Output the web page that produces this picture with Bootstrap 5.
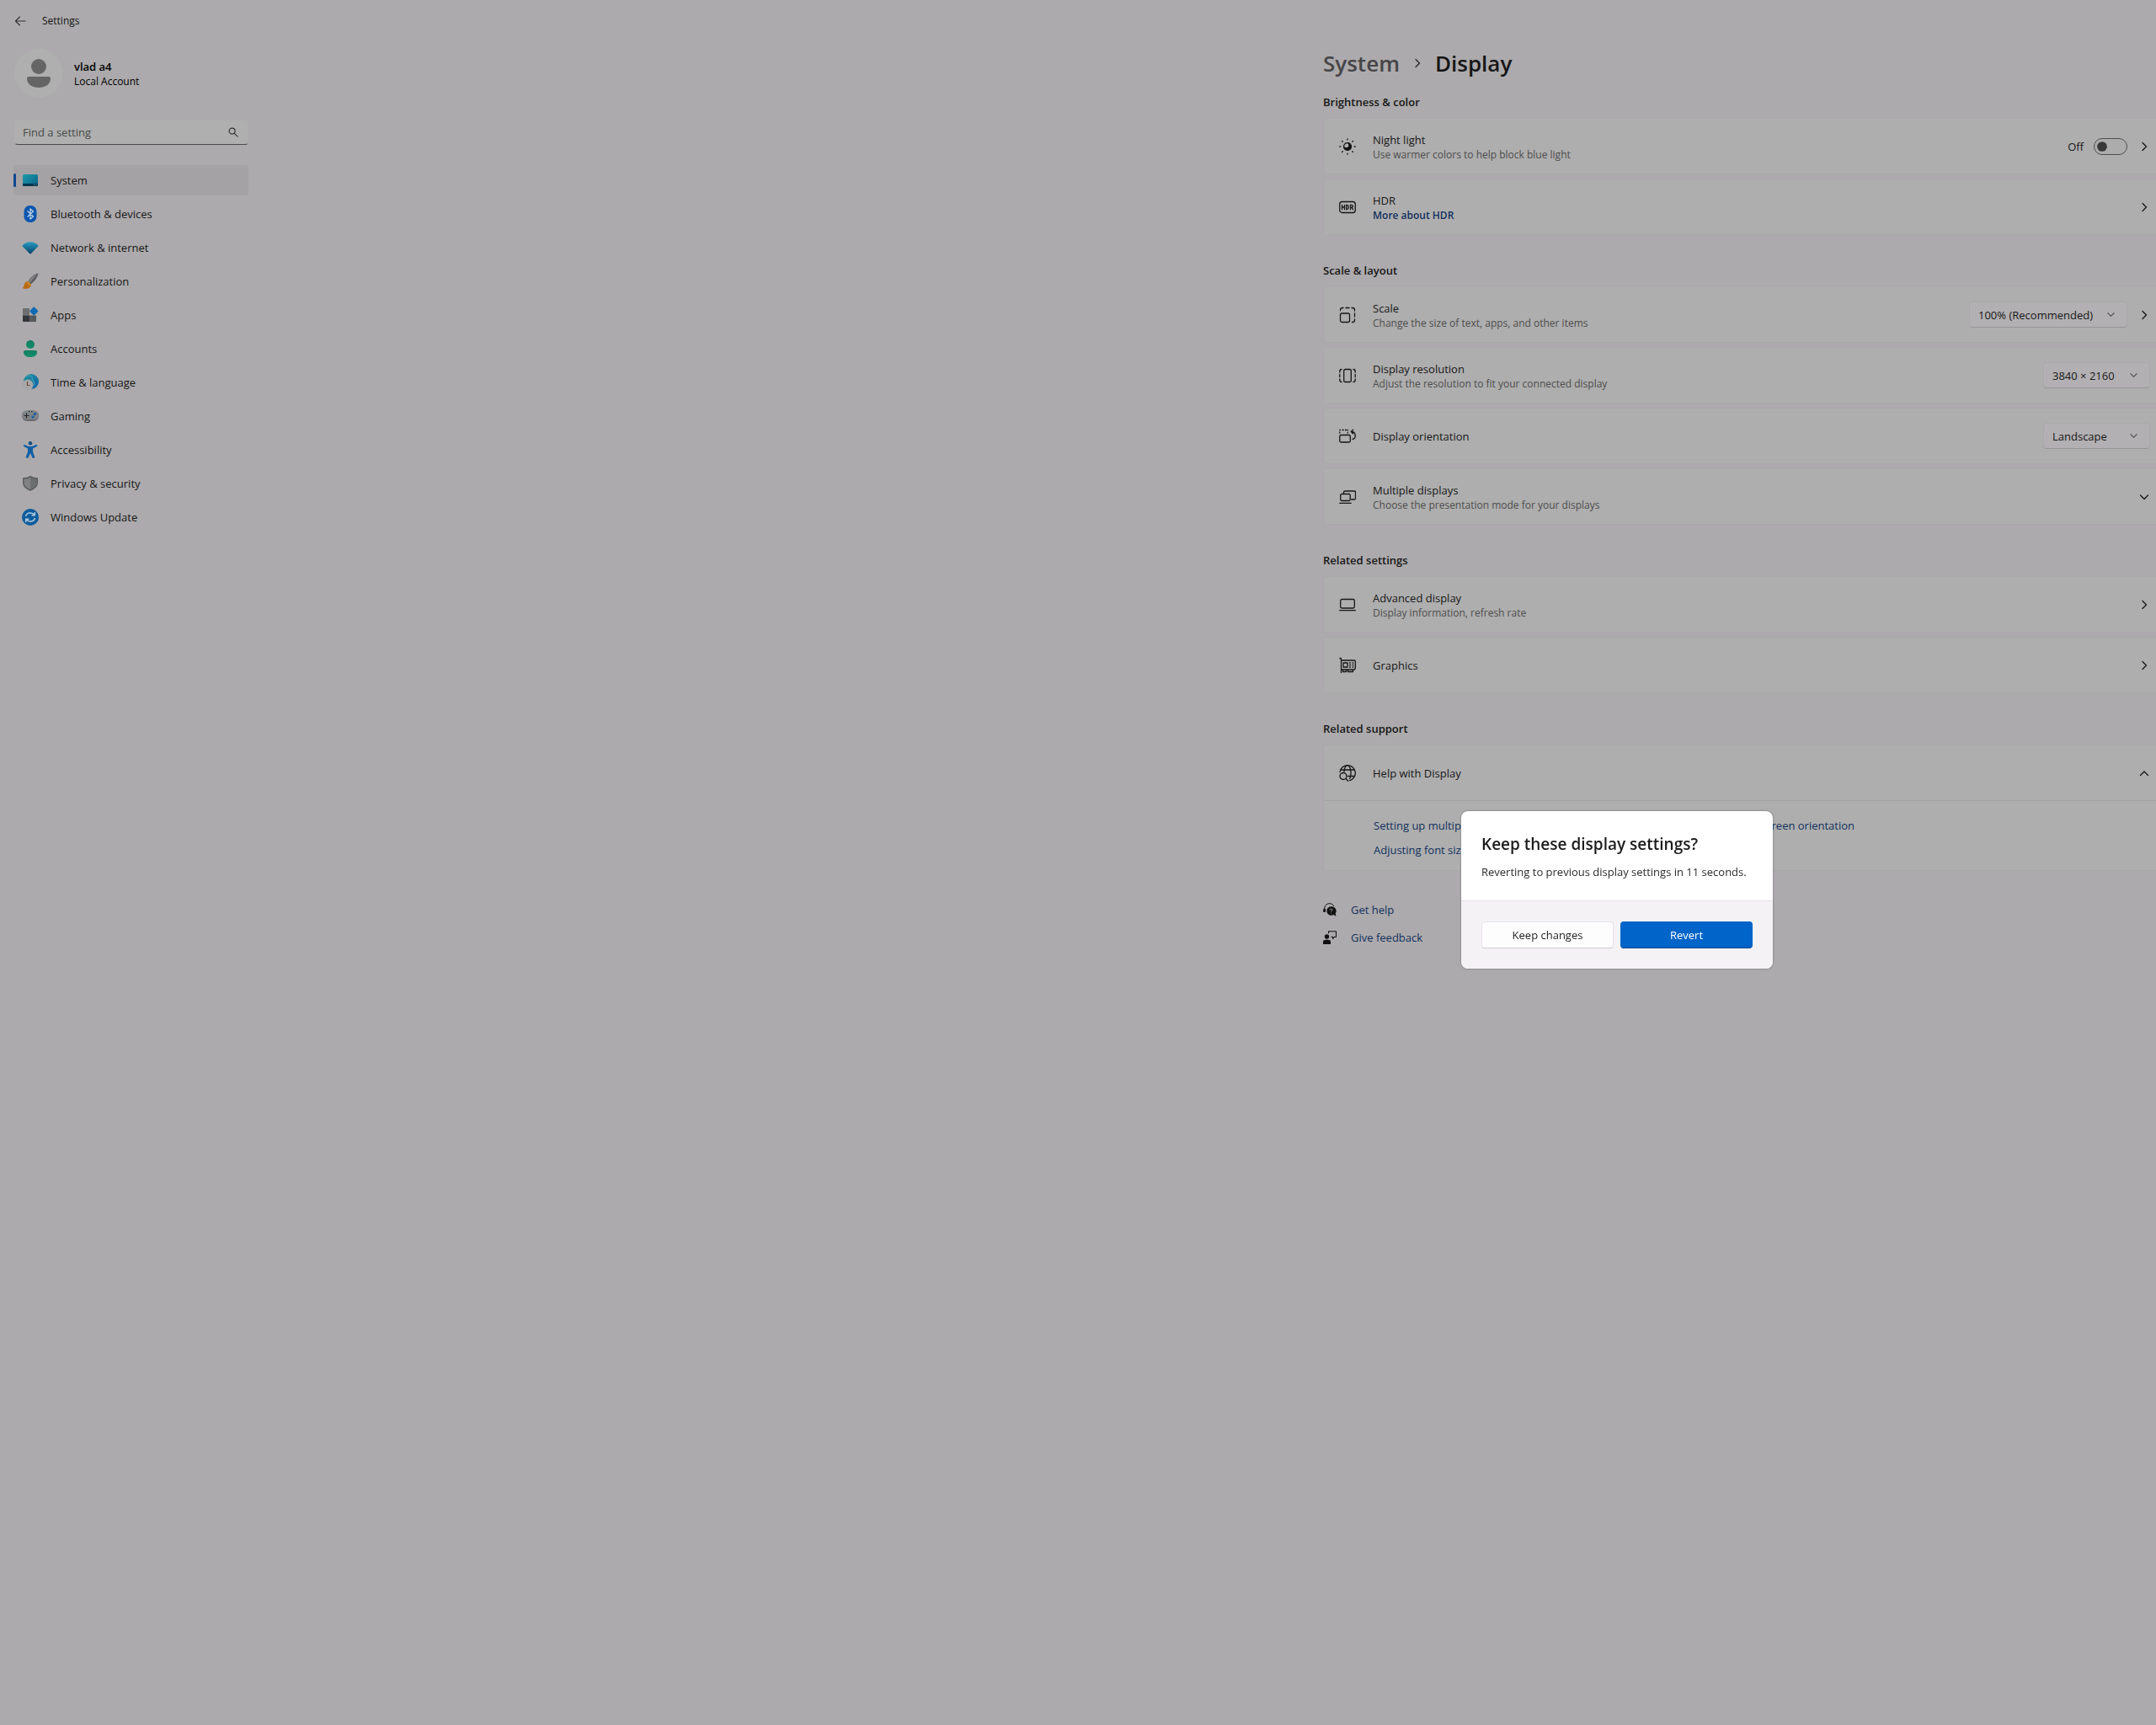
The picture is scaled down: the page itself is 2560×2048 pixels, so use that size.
<!DOCTYPE html>
<html lang="en">
<head>
<meta charset="utf-8">
<meta name="viewport" content="width=device-width, initial-scale=1">
<title>Settings</title>
<link href="https://cdn.jsdelivr.net/npm/bootstrap@5.3.0/dist/css/bootstrap.min.css" rel="stylesheet">
<style>
:root{--page:#acaaac;--panel:#aeaeae;--line:#aaa9aa;--ink:#161616;--soft:#4d4d4d;--link:#12305c}
body{background:var(--page);color:var(--ink);font-family:"Open Sans","Noto Sans",sans-serif;font-size:13px;line-height:20px;min-height:100vh}
a{color:var(--link);text-decoration:none}
svg{display:block;flex:none}
.fine{font-size:12px;line-height:16px}
.hint{color:var(--soft)}
.ln{fill:none;stroke:currentColor;stroke-width:1.3;stroke-linecap:round;stroke-linejoin:round}

.side{width:295px;padding:0 0 0 16px;flex:none}
.titlebar{height:49px;padding-left:1px;gap:19px}
.back{background:none;border:0;padding:0;color:#333}
.profile{height:58px;gap:13px;margin-top:9px;padding-left:1px}
.avatar{width:58px;height:58px;border-radius:50%;background:#aeafae}
.search{margin:26px 0 24px 1px;position:relative}
.search .form-control{height:30px;background:#afafaf;border:1px solid #adadad;border-bottom:1px solid #4a4a4a;border-radius:4px;font-size:13px;padding:0 32px 0 9px;color:var(--ink)}
.search .form-control::placeholder{color:#484a48;opacity:1}
.search svg{position:absolute;right:12px;top:9px;color:#333}
.side .nav{gap:4px}
.side .nav-link{height:36px;padding:0 0 0 10px;gap:14px;color:var(--ink);border-radius:4px;position:relative}
.side .nav-link.active{background:#a4a2a4}
.side .nav-link.active::before{content:"";position:absolute;left:0;top:10px;width:3px;height:16px;border-radius:2px;background:#0a468f}

.pane{width:100%;max-width:989px;margin-left:auto;padding-top:57px}
.crumbs{font-size:26px;line-height:36px;font-weight:600;gap:14px;margin-bottom:18px}
.crumbs a{color:#464547}
.crumbs h1{font:inherit;margin:0}
.group-title{font-size:13px;line-height:20px;font-weight:600;margin:0 0 9px}
.group{margin-bottom:32px}
.rows{gap:5px}
.setting{min-height:67px;background:var(--panel);border:1px solid var(--line);border-right:0;border-radius:4px 0 0 4px;padding:0 7px 0 18px;gap:20px}
.setting .tail{gap:13px}
.setting .form-select{width:127px;height:31px;font-size:13px;line-height:20px;padding:0 32px 0 10px;color:var(--ink);border:1px solid #aaa8aa;border-bottom-color:#979597;border-radius:4px;background-color:#b2b0b2;background-position:right 13px center;background-size:11px 11px;
background-image:url("data:image/svg+xml,%3csvg xmlns='http://www.w3.org/2000/svg' viewBox='0 0 12 12'%3e%3cpath fill='none' stroke='%23444' stroke-width='1.1' stroke-linecap='round' d='M2 4l4 4 4-4'/%3e%3c/svg%3e")}
.setting .form-select.wide{width:188px}
.switch{gap:12px}
.switch .form-check-input{width:40px;height:20px;margin:0;border:1px solid #4f4f4f;background-color:#acacac;
background-image:url("data:image/svg+xml,%3csvg xmlns='http://www.w3.org/2000/svg' viewBox='-4 -4 8 8'%3e%3ccircle r='2.6' fill='%23383838'/%3e%3c/svg%3e");background-position:left center}
.help-top{border-radius:4px 0 0 0;border-bottom-color:#a3a2a3}
.help-body{background:var(--panel);border:1px solid var(--line);border-top:0;border-right:0;border-radius:0 0 0 4px;padding:19px 0 14px 59px;gap:9px}
.help-col{width:400px}
.extra{gap:13px;margin-top:36px}
.extra a{gap:17px}
.extra svg{color:#111}

.veil{position:fixed;top:64px;right:0;bottom:0;width:50%}
.dialog-box{width:370px;background:#fff;border:0;border-radius:8px;box-shadow:0 0 2px rgba(0,0,0,.5);overflow:hidden}
.dialog-box .modal-body{padding:26px 24px 0;height:106px;flex:none}
.dialog-box h2{font-size:19px;line-height:26px;font-weight:600;margin:0 0 10px;color:#1b1b1b}
.dialog-box p{margin:0;color:#2b2b2b}
.dialog-box .modal-footer{background:#f5f2f6;border-top:1px solid #e3e0e4;border-radius:0;padding:24px;gap:8px;flex-wrap:nowrap}
.dialog-box .btn{margin:0;height:32px;font-size:13px;line-height:20px;padding:0;border-radius:4px;flex:1 1 0}
.btn-keep,.btn-keep:hover{background:#fefdfe;border:1px solid #e6e3e7;border-bottom-color:#cfccd0;color:#1f1f1f}
.btn-revert,.btn-revert:hover{background:#0064c8;border:1px solid #0064c8;border-bottom-color:#00468f;color:#fff}
</style>
</head>
<body>
<svg width="0" height="0" class="position-absolute" aria-hidden="true">
  <defs>
    <linearGradient id="gTeal" x1="0" y1="0" x2="1" y2="1"><stop offset="0" stop-color="#1c9bac"/><stop offset="1" stop-color="#0b5f86"/></linearGradient>
    <linearGradient id="gWifi" x1="0" y1="0" x2="0" y2="1"><stop offset="0" stop-color="#2a9fc0"/><stop offset="1" stop-color="#063f6c"/></linearGradient>
    <linearGradient id="gGlobe" x1="0" y1="0" x2="1" y2="1"><stop offset="0" stop-color="#22939f"/><stop offset="1" stop-color="#0c61a8"/></linearGradient>
    <linearGradient id="gGreen" x1="0" y1="0" x2="0" y2="1"><stop offset="0" stop-color="#107c5e"/><stop offset="1" stop-color="#14906f"/></linearGradient>
    <symbol id="right" viewBox="0 0 14 14"><path class="ln" d="M5 2.500 9.500 7 5 11.500"/></symbol>
    <symbol id="down" viewBox="0 0 14 14"><path class="ln" d="M2.500 5 7 9.500 11.500 5"/></symbol>
    <symbol id="up" viewBox="0 0 14 14"><path class="ln" d="M2.500 9.500 7 5l4.500 4.500"/></symbol>
  </defs>
</svg>

<div class="d-flex">
  <aside class="side">
    <header class="titlebar d-flex align-items-center fine">
      <button class="back" type="button" aria-label="Back"><svg width="14" height="14" viewBox="0 0 14 14"><path class="ln" style="stroke-width:1.100" d="M13 7H1.500M6.500 2l-5 5 5 5"/></svg></button>
      <span>Settings</span>
    </header>
    <div class="profile d-flex align-items-center">
      <div class="avatar d-flex align-items-center justify-content-center">
        <svg width="30" height="36" viewBox="0 0 30 36" fill="#656565"><circle cx="15" cy="10" r="9"/><path d="M3 22h24q2 0 2 2c0 7-6 11-14 11S1 31 1 24q0-2 2-2z"/></svg>
      </div>
      <div><div class="fw-semibold text-black">vlad a4</div><div class="fine text-black">Local Account</div></div>
    </div>
    <form class="search" role="search">
      <input class="form-control" type="search" placeholder="Find a setting" aria-label="Find a setting">
      <svg width="12" height="12" viewBox="0 0 13 13"><circle class="ln" cx="5" cy="5" r="3.800"/><path class="ln" d="M8 8l4 4"/></svg>
    </form>
    <nav class="nav flex-column" aria-label="Settings sections">
      <a class="nav-link active d-flex align-items-center" aria-current="page" href="#system"><svg width="20" height="20" viewBox="0 0 20 20"><rect x="1" y="3" width="18" height="14" rx="1.500" fill="url(#gTeal)"/><path d="M1 14h18v1.500a1.500 1.500 0 0 1-1.500 1.500h-15A1.500 1.500 0 0 1 1 15.500z" fill="#06364f"/><path d="M14 15.500h1M16.500 15.500h1" stroke="#8fb4c4" stroke-width=".8"/></svg>System</a>
      <a class="nav-link d-flex align-items-center" href="#bluetooth"><svg width="20" height="20" viewBox="0 0 20 20"><rect x="2.500" width="15" height="20" rx="7" fill="#0b56ae"/><path d="M6.500 6.500l7 6.500L10 16V4l3.500 3-7 6.500" fill="none" stroke="#b9cfe4" stroke-width="1.300" stroke-linejoin="round"/></svg>Bluetooth &amp; devices</a>
      <a class="nav-link d-flex align-items-center" href="#network"><svg width="20" height="20" viewBox="0 0 20 20"><path d="M.8 7.300C5.500 1.800 14.500 1.800 19.200 7.300q.5.600 0 1.200L10.800 17q-.8.800-1.600 0L.8 8.500q-.5-.6 0-1.200z" fill="url(#gWifi)"/></svg>Network &amp; internet</a>
      <a class="nav-link d-flex align-items-center" href="#personalization"><svg width="20" height="20" viewBox="0 0 20 20"><path d="M19.500.5c-4 .5-10 5-12.500 10l3.500 3C14.500 10.500 19 5 19.500.5z" fill="#5c5c60"/><path d="M18 1.500c-4 1.500-8 5.500-10.500 9.500l1.300 1z" fill="#8a8a8d"/><path d="M7 10c-3 .2-4 2.200-4.300 4.400C2.500 16.700 1 17.500.5 18 5 20.300 11 18 11 13.700z" fill="#b86c14"/><path d="M7 10l4 3.700-1 1.800-4-3.500z" fill="#d08a24"/></svg>Personalization</a>
      <a class="nav-link d-flex align-items-center" href="#apps"><svg width="20" height="20" viewBox="0 0 20 20"><path d="M1 2h8v8.500H1z" fill="#6d6f70"/><path d="M1 10.500h8.500V18H2a1 1 0 0 1-1-1z" fill="#333538"/><path d="M9.500 10.500H17V17a1 1 0 0 1-1 1H9.500z" fill="#55585a"/><rect x="10.500" y="1.700" width="7.500" height="7.500" rx="1" transform="rotate(45 14.250 5.500)" fill="#1069b4"/></svg>Apps</a>
      <a class="nav-link d-flex align-items-center" href="#accounts"><svg width="20" height="20" viewBox="0 0 20 20" fill="url(#gGreen)"><circle cx="10" cy="5" r="5"/><path d="M4 12h12q2 0 2 2c0 4-3.500 6-8 6s-8-2-8-6q0-2 2-2z"/></svg>Accounts</a>
      <a class="nav-link d-flex align-items-center" href="#time"><svg width="20" height="20" viewBox="0 0 20 20"><circle cx="11" cy="9" r="9" fill="url(#gGlobe)"/><path d="M5 3.500c3-1.500 6-1.500 7 0s-1 2.500 1 4 2 4 1 6" fill="none" stroke="#3a9fb0" stroke-width="1.300"/><circle cx="7" cy="13" r="6.500" fill="#a6a6a7"/><path d="M6.500 9v4.500h3" fill="none" stroke="#704a38" stroke-width="1.200"/></svg>Time &amp; language</a>
      <a class="nav-link d-flex align-items-center" href="#gaming"><svg width="20" height="20" viewBox="0 0 20 20"><rect y="3.500" width="20" height="12.500" rx="6.250" fill="#696b6e"/><rect y="3.500" width="20" height="10.500" rx="5.250" fill="#7f8387"/><path d="M5.500 6.500v6M2.500 9.500h6M8 4.500h1.500M11 4.500h1.500" stroke="#25282b" stroke-width="1.200"/><circle cx="13" cy="11" r="1.700" fill="#1b5f9f"/><circle cx="15.500" cy="7.500" r="1.700" fill="#1b5f9f"/></svg>Gaming</a>
      <a class="nav-link d-flex align-items-center" href="#accessibility"><svg width="20" height="20" viewBox="0 0 20 20"><circle cx="10" cy="2.300" r="2.300" fill="#164f85"/><path d="M2.500 3.800 7.800 6h4.400l5.300-2.200 .7 2L13 8.500v4l2.500 6.700-2.800.8L10 14l-2.700 6-2.800-.8L7 12.500v-4L1.800 5.800z" fill="#115ea6"/></svg>Accessibility</a>
      <a class="nav-link d-flex align-items-center" href="#privacy"><svg width="20" height="20" viewBox="0 0 20 20"><path d="M10 .8C12.500 2.500 15.500 3.300 19 3.300v6c0 4.500-4 7.500-9 9.700-5-2.200-9-5.200-9-9.700v-6C4.500 3.300 7.500 2.500 10 .8z" fill="#5c5e5f"/><path d="M10 2.500v14.800c-4.300-2-7.500-4.500-7.500-8V4.800c3 0 5.500-.9 7.500-2.300z" fill="#7f8182"/><path d="M10 2.500v14.800c4.300-2 7.500-4.500 7.500-8V4.800c-3 0-5.500-.9-7.500-2.300z" fill="#6c6e6f"/></svg>Privacy &amp; security</a>
      <a class="nav-link d-flex align-items-center" href="#update"><svg width="20" height="20" viewBox="0 0 20 20"><circle cx="10" cy="10" r="10" fill="#0d5c9e"/><path d="M4.500 9C5.500 4.500 12 3.500 15 7.500M15.300 4v3.800h-3.800M15.500 11c-1 4.500-7.500 5.500-10.500 1.500M4.700 16v-3.800h3.800" fill="none" stroke="#b4c8d8" stroke-width="1.500"/></svg>Windows Update</a>
    </nav>
  </aside>

  <main class="pane">
    <nav class="crumbs d-flex align-items-center" aria-label="Breadcrumb">
      <a href="#system">System</a>
      <svg class="text-dark" width="14" height="14"><use href="#right"/></svg>
      <h1>Display</h1>
    </nav>

    <section class="group">
      <h2 class="group-title">Brightness &amp; color</h2>
      <div class="rows d-flex flex-column">
        <div class="setting d-flex align-items-center">
          <svg width="20" height="20" viewBox="0 0 20 20"><circle cx="10" cy="10" r="4.800" fill="#111"/><circle cx="8.500" cy="8.500" r="2.800" fill="#aeaeae"/><circle class="ln" cx="10" cy="10" r="4.400"/><path class="ln" d="M10 .8v1M10 18.200v1M.8 10h1M18.200 10h1M3.500 3.500l.7.7M15.800 15.800l.7.7M3.500 16.500l.7-.7M15.800 4.200l.7-.7"/></svg>
          <div class="flex-grow-1"><div>Night light</div><div class="fine hint">Use warmer colors to help block blue light</div></div>
          <div class="tail d-flex align-items-center">
            <div class="switch form-switch d-flex align-items-center p-0 m-0"><label for="night">Off</label><input class="form-check-input" type="checkbox" role="switch" id="night"></div>
            <svg width="14" height="14"><use href="#right"/></svg>
          </div>
        </div>
        <div class="setting d-flex align-items-center">
          <svg width="20" height="20" viewBox="0 0 20 20"><rect class="ln" x=".7" y="3.500" width="18.600" height="13" rx="3"/><path class="ln" d="M3.500 7.300v5.400M6.500 7.300v5.400M3.500 10h3M8.700 7.300v5.400h.8q1.700-.4 1.700-2.700T9.500 7.300zM13.500 12.700V7.300h1.400q1.600.2 1.600 1.500t-1.600 1.500h-1.400M15 10.500l1.500 2.200"/></svg>
          <div class="flex-grow-1"><div>HDR</div><a class="fine fw-semibold d-block" href="#hdr">More about HDR</a></div>
          <svg width="14" height="14"><use href="#right"/></svg>
        </div>
      </div>
    </section>

    <section class="group">
      <h2 class="group-title">Scale &amp; layout</h2>
      <div class="rows d-flex flex-column">
        <div class="setting d-flex align-items-center">
          <svg width="20" height="20" viewBox="0 0 20 20"><rect class="ln" x="1.500" y="8" width="11" height="10.500" rx="2"/><path class="ln" d="M1.500 4.500V4q0-2.500 2.500-2.500h1M8 1.500h4M15 1.500h1q2.500 0 2.500 2.500v1M18.500 8v4M18.500 15v1q0 2.500-2.500 2.500h-.5"/></svg>
          <div class="flex-grow-1"><label class="d-block" for="scale">Scale</label><div class="fine hint">Change the size of text, apps, and other items</div></div>
          <div class="tail d-flex align-items-center">
            <select class="form-select wide" id="scale"><option>100% (Recommended)</option></select>
            <svg width="14" height="14"><use href="#right"/></svg>
          </div>
        </div>
        <div class="setting d-flex align-items-center">
          <svg width="20" height="20" viewBox="0 0 20 20"><rect class="ln" x="5.700" y="2.500" width="8.600" height="15" rx="1.500"/><path class="ln" d="M3 2.500Q.8 2.500.8 5v1M.8 8.500v3M.8 14v1q0 2.500 2.200 2.500M17 2.500q2.200 0 2.200 2.500v1M19.200 8.500v3M19.200 14v1q0 2.500-2.200 2.500"/></svg>
          <div class="flex-grow-1"><label class="d-block" for="res">Display resolution</label><div class="fine hint">Adjust the resolution to fit your connected display</div></div>
          <select class="form-select" id="res"><option>3840 × 2160</option></select>
        </div>
        <div class="setting d-flex align-items-center">
          <svg width="20" height="20" viewBox="0 0 20 20"><rect class="ln" x=".8" y="8.500" width="12.500" height="8.500" rx="1.500"/><path class="ln" d="M.8 6V5M.8 2.500h.7M4 2.500h1.200M7.500 2.500h1.200M10.300 2.500v.7M10.300 5.500v.7M14.500 4.500c6 0 6 8.500 1.500 9M16.500 2.300l-2.200 2.200 2.200 2.200"/></svg>
          <label class="flex-grow-1" for="ori">Display orientation</label>
          <select class="form-select" id="ori"><option>Landscape</option></select>
        </div>
        <div class="setting d-flex align-items-center">
          <svg width="20" height="20" viewBox="0 0 20 20"><path class="ln" d="M5.500 6V4.500q0-1.500 1.500-1.500h11q1.500 0 1.500 1.500v7q0 1.500-1.500 1.500h-3.500"/><rect class="ln" x="1.700" y="6.500" width="11.500" height="8" rx="1.500"/><path class="ln" d="M.7 17.300h13.500"/></svg>
          <div class="flex-grow-1"><div>Multiple displays</div><div class="fine hint">Choose the presentation mode for your displays</div></div>
          <svg width="14" height="14"><use href="#down"/></svg>
        </div>
      </div>
    </section>

    <section class="group">
      <h2 class="group-title">Related settings</h2>
      <div class="rows d-flex flex-column">
        <div class="setting d-flex align-items-center">
          <svg width="20" height="20" viewBox="0 0 20 20"><rect class="ln" x="1.700" y="3.500" width="16.600" height="10.500" rx="1.700"/><path class="ln" d="M.7 16.700h18.600"/></svg>
          <div class="flex-grow-1"><div>Advanced display</div><div class="fine hint">Display information, refresh rate</div></div>
          <svg width="14" height="14"><use href="#right"/></svg>
        </div>
        <div class="setting d-flex align-items-center">
          <svg width="20" height="20" viewBox="0 0 20 20"><path class="ln" d="M.8 1.500h1q.7 0 .7.700v16.300M2.500 4h15.500q1.300 0 1.300 1.300v8.400L18 15H2.500M4.500 15v2.500h4V15M10.500 15v2.500h6V15"/><rect class="ln" x="5" y="7" width="5" height="5"/><path class="ln" d="M12.500 7h1M12.500 9.500h1M12.500 12h1M16 7h.8M16 9.500h.8M16 12h.8"/></svg>
          <div class="flex-grow-1">Graphics</div>
          <svg width="14" height="14"><use href="#right"/></svg>
        </div>
      </div>
    </section>

    <section>
      <h2 class="group-title">Related support</h2>
      <div class="setting help-top d-flex align-items-center">
        <svg width="20" height="20" viewBox="0 0 20 20"><path class="ln" d="M1 8.500A9.200 9.200 0 1 1 12.500 18.700M2 6h16.300M10.500 13.500h8M6 8C6.300 3.500 8 .8 10 .8c3.300 0 5.500 8.200 2.800 15.700"/><circle class="ln" cx="5" cy="13.500" r="4"/><path class="ln" d="M8 16.500l2.800 2.700"/></svg>
        <div class="flex-grow-1">Help with Display</div>
        <svg width="14" height="14"><use href="#up"/></svg>
      </div>
      <div class="help-body d-flex flex-column">
        <div class="d-flex"><a class="help-col" href="#monitors">Setting up multiple monitors</a><a href="#orientation">Changing screen orientation</a></div>
        <div class="d-flex"><a class="help-col" href="#font-size">Adjusting font size</a></div>
      </div>
    </section>

    <div class="extra d-flex flex-column align-items-start">
      <a class="d-flex align-items-center" href="#help"><svg width="16" height="16" viewBox="0 0 16 16"><path class="ln" style="stroke-width:1" d="M1.500 7.500C1.500 3.500 4 .7 7.500.7c2.500 0 4.500 1.300 5.300 3M1.500 7v3M.7 8v2.500h1.800V7.500z"/><path d="M9.500 4.200a5.300 5.300 0 1 0 2.800 9.900l3.200 1.700-.9-3.300A5.300 5.300 0 0 0 9.500 4.200z" fill="currentColor"/><path d="M8 8.300c.2-1.800 3.200-1.500 2.900.2-.2.900-1.400 1-1.400 2M9.500 11.600v.8" fill="none" stroke="#acaaac"/></svg>Get help</a>
      <a class="d-flex align-items-center" href="#feedback"><svg width="16" height="16" viewBox="0 0 16 16"><circle cx="4.500" cy="7" r="2.700" fill="currentColor"/><path d="M0 16v-2.500Q0 10.700 2.800 10.700h3.400Q9 10.700 9 13.500V16z" fill="currentColor"/><path class="ln" style="stroke-width:1.100" d="M6.500 2.800V.7h9v6.600h-2l-2 2v-2h-1.500"/></svg>Give feedback</a>
    </div>
  </main>
</div>

<div class="veil d-flex align-items-center justify-content-center">
  <div class="dialog-box modal-content" role="dialog" aria-modal="true" aria-labelledby="keepTitle">
    <div class="modal-body">
      <h2 id="keepTitle">Keep these display settings?</h2>
      <p>Reverting to previous display settings in 11 seconds.</p>
    </div>
    <div class="modal-footer">
      <button type="button" class="btn btn-keep">Keep changes</button>
      <button type="button" class="btn btn-revert">Revert</button>
    </div>
  </div>
</div>
<script src="https://cdn.jsdelivr.net/npm/bootstrap@5.3.0/dist/js/bootstrap.bundle.min.js"></script>
</body>
</html>
